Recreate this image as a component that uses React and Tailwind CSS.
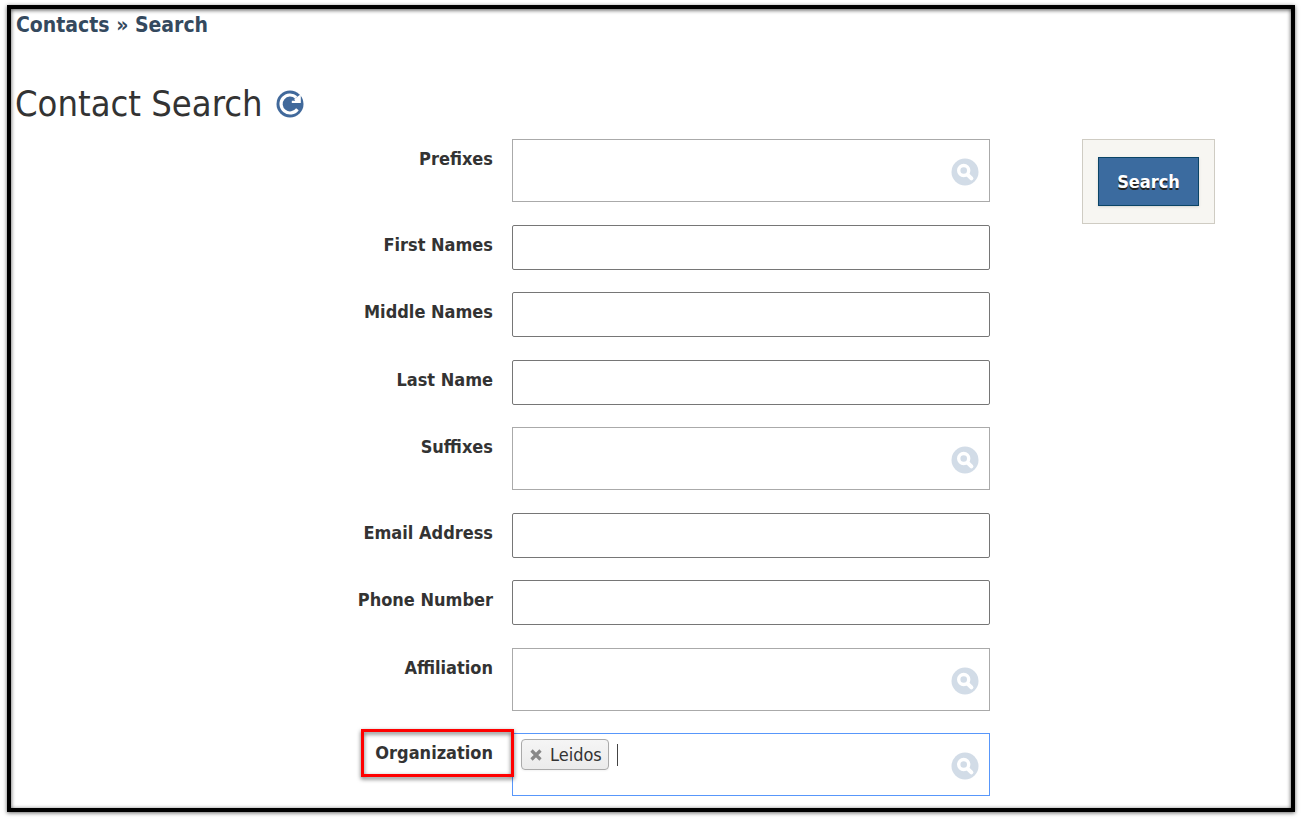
import React, { useState } from 'react';

const FIELDS = [
  { id: 'prefixes', label: 'Prefixes', type: 'lookup' },
  { id: 'firstNames', label: 'First Names', type: 'text' },
  { id: 'middleNames', label: 'Middle Names', type: 'text' },
  { id: 'lastName', label: 'Last Name', type: 'text' },
  { id: 'suffixes', label: 'Suffixes', type: 'lookup' },
  { id: 'email', label: 'Email Address', type: 'text' },
  { id: 'phone', label: 'Phone Number', type: 'text' },
  { id: 'affiliation', label: 'Affiliation', type: 'lookup' },
  { id: 'organization', label: 'Organization', type: 'lookup', highlighted: true },
];

const RefreshIcon = () => (
  <svg className="w-7 h-7" viewBox="0 0 28 28" fill="none">
    <circle cx="14" cy="14" r="13.5" fill="#41699b" />
    <path d="M21.4 19.2A9 9 0 1 1 20.2 7.4" stroke="#fff" strokeWidth="3.2" />
    <path d="M24.8 4.2V13H15.8v-2.2h3.4l-1-1.8z" fill="#fff" />
  </svg>
);

const LookupIcon = () => (
  <svg className="w-7 h-7" viewBox="0 0 28 28" fill="none">
    <circle cx="14" cy="14" r="13.5" fill="#d2dce7" />
    <circle cx="12.7" cy="12.5" r="5" stroke="#fff" strokeWidth="3.4" />
    <path d="M16.8 16.8l3.6 3.6" stroke="#fff" strokeWidth="4" strokeLinecap="round" />
  </svg>
);

const Tag = ({ name, onRemove }) => (
  <span className="flex items-center gap-2 h-[31px] pl-2 pr-1.5 border border-[#aaa] rounded bg-linear-to-b from-[#f5f5f5] to-[#ebebeb] shadow-xs text-lg leading-6 text-[#333]">
    <button type="button" onClick={onRemove} aria-label={`Remove ${name}`}>
      <svg className="w-3 h-3" viewBox="0 0 12 12" fill="none">
        <path d="M1.5 1.5l9 9M10.5 1.5l-9 9" stroke="#888" strokeWidth="3.2" />
      </svg>
    </button>
    {name}
  </span>
);

const LookupField = ({ id, tags, onRemove, focused }) => (
  <div
    className={
      focused
        ? 'flex items-start h-[63px] pl-2 pr-2.5 pt-[5px] border border-[#5897fb] bg-white'
        : 'flex items-start h-[63px] pl-2 pr-2.5 pt-[5px] border border-[#aaa] bg-white'
    }
  >
    {tags.map((tag) => (
      <Tag key={tag} name={tag} onRemove={() => onRemove(tag)} />
    ))}
    {focused && <span className="w-px h-[22px] ml-2 mt-[5px] bg-[#444]" />}
    <input id={id} type="text" className="flex-1 min-w-0 h-8 px-2 outline-none" />
    <button type="button" aria-label="Lookup" className="mt-[13px]">
      <LookupIcon />
    </button>
  </div>
);

const FieldRow = ({ field, tags, onRemove }) => (
  <div className="grid grid-cols-2 gap-[19px]">
    <div className="relative pt-2 text-right">
      <label htmlFor={field.id} className="text-lg leading-6 font-bold text-[#333]">
        {field.label}
      </label>
      {field.highlighted && (
        <div className="absolute -top-1 -right-[21px] w-[153px] h-12 border-3 border-[#f00] drop-shadow-[0_2px_2px_rgba(0,0,0,0.6)]" />
      )}
    </div>
    {field.type === 'lookup' ? (
      <LookupField id={field.id} tags={tags} onRemove={onRemove} focused={field.highlighted} />
    ) : (
      <input
        id={field.id}
        type="text"
        className="w-full h-[45px] px-2 border border-[#767676] rounded-xs bg-white text-lg text-[#333] outline-none"
      />
    )}
  </div>
);

export default function App() {
  const [organizations, setOrganizations] = useState(['Leidos']);

  const removeOrganization = (name) => {
    setOrganizations((prev) => prev.filter((o) => o !== name));
  };

  return (
    <div className="flex min-h-screen pt-[5px] pb-2 px-[7px] bg-white font-['DejaVu_Sans_Condensed','DejaVu_Sans',sans-serif]">
      <div className="flex flex-col flex-1 pl-1 pr-[76px] pb-3 border-4 border-black shadow-[0_1px_4px_rgba(0,0,0,0.6),inset_0_1px_4px_rgba(0,0,0,0.7)]">
        <nav className="pt-1 pl-px text-[21px] leading-6 font-bold text-[#34495e]">
          <a href="#contacts">Contacts</a> » <a href="#search">Search</a>
        </nav>

        <div className="flex items-center gap-3.5 mt-[43px] mb-[11px]">
          <h1 className="text-4xl leading-12 text-[#333]">Contact Search</h1>
          <button type="button" aria-label="Refresh">
            <RefreshIcon />
          </button>
        </div>

        <form className="flex flex-1 items-start gap-[92px]" onSubmit={(e) => e.preventDefault()}>
          <div className="flex flex-col flex-1 self-stretch justify-between">
            {FIELDS.map((field) => (
              <FieldRow
                key={field.id}
                field={field}
                tags={field.id === 'organization' ? organizations : []}
                onRemove={removeOrganization}
              />
            ))}
          </div>

          {/* Panel de acciones */}
          <div className="px-[15px] py-[17px] border border-[#cfccc3] bg-[#f7f6f2]">
            <button
              type="submit"
              className="w-[101px] h-[49px] border border-[#0a4466] bg-[#3b6b9f] text-lg font-bold text-white shadow-sm text-shadow-[0_2px_0_#222]"
            >
              Search
            </button>
          </div>
        </form>
      </div>
    </div>
  );
}
